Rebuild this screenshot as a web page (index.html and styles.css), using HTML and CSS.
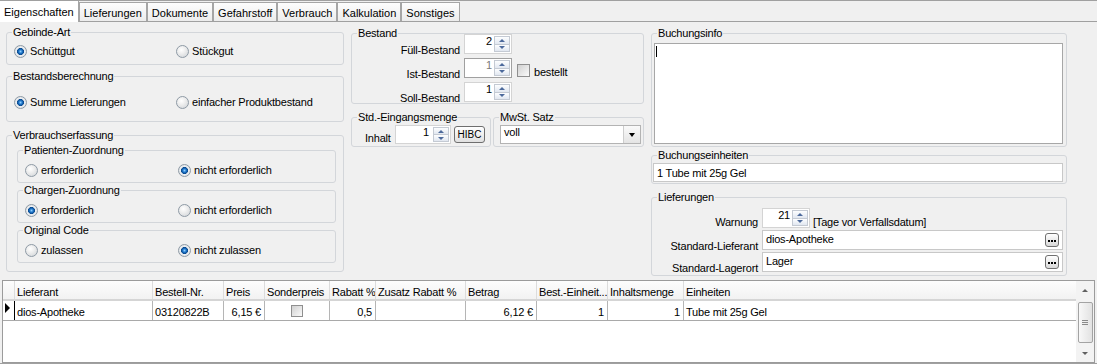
FILE: index.html
```html
<!DOCTYPE html>
<html lang="de">

<head>
    <meta charset="utf-8">
    <title>Artikel - Eigenschaften</title>
    <link rel="stylesheet" href="styles.css">
</head>

<body>

    <div class="window">
        <div class="tabbar">
            <div class="tab active">Eigenschaften</div>
            <div class="tab">Lieferungen</div>
            <div class="tab">Dokumente</div>
            <div class="tab">Gefahrstoff</div>
            <div class="tab">Verbrauch</div>
            <div class="tab">Kalkulation</div>
            <div class="tab">Sonstiges</div>
        </div>

        <div class="page">
            <!-- left column -->
            <div class="col col-left">
                <fieldset class="gb-gebinde">
                    <legend>Gebinde-Art</legend>
                    <div class="radios top-radios">
                        <span class="radio on"><i></i>Schüttgut</span>
                        <span class="radio"><i></i>Stückgut</span>
                    </div>
                </fieldset>

                <fieldset class="gb-berechnung">
                    <legend>Bestandsberechnung</legend>
                    <div class="radios top-radios">
                        <span class="radio on"><i></i>Summe Lieferungen</span>
                        <span class="radio"><i></i>einfacher Produktbestand</span>
                    </div>
                </fieldset>

                <fieldset class="gb-verbrauch">
                    <legend>Verbrauchserfassung</legend>
                    <div class="subs">
                        <fieldset class="sub">
                            <legend>Patienten-Zuordnung</legend>
                            <div class="radios">
                                <span class="radio"><i></i>erforderlich</span>
                                <span class="radio on"><i></i>nicht erforderlich</span>
                            </div>
                        </fieldset>
                        <fieldset class="sub">
                            <legend>Chargen-Zuordnung</legend>
                            <div class="radios">
                                <span class="radio on"><i></i>erforderlich</span>
                                <span class="radio"><i></i>nicht erforderlich</span>
                            </div>
                        </fieldset>
                        <fieldset class="sub">
                            <legend>Original Code</legend>
                            <div class="radios">
                                <span class="radio"><i></i>zulassen</span>
                                <span class="radio on"><i></i>nicht zulassen</span>
                            </div>
                        </fieldset>
                    </div>
                </fieldset>
            </div>

            <!-- middle column -->
            <div class="col col-mid">
                <fieldset class="gb-bestand">
                    <legend>Bestand</legend>
                    <div class="bestand-rows">
                        <div class="frow">
                            <span class="lbl">Füll-Bestand</span>
                            <div class="spin"><span class="val">2</span><span class="btns"><i class="up"></i><i class="dn"></i></span></div>
                        </div>
                        <div class="frow">
                            <span class="lbl">Ist-Bestand</span>
                            <div class="spin dis"><span class="val">1</span><span class="btns"><i class="up"></i><i class="dn"></i></span></div>
                            <span class="check"></span>
                            <span class="check-text">bestellt</span>
                        </div>
                        <div class="frow">
                            <span class="lbl">Soll-Bestand</span>
                            <div class="spin"><span class="val">1</span><span class="btns"><i class="up"></i><i class="dn"></i></span></div>
                        </div>
                    </div>
                </fieldset>

                <div class="mid-bottom">
                    <fieldset class="gb-std">
                        <legend>Std.-Eingangsmenge</legend>
                        <div class="std-row">
                            <span class="lbl-inhalt">Inhalt</span>
                            <div class="spin wide"><span class="val">1</span><span class="btns"><i class="up"></i><i class="dn"></i></span></div>
                            <span class="hibc">HIBC</span>
                        </div>
                    </fieldset>
                    <fieldset class="gb-mwst">
                        <legend>MwSt. Satz</legend>
                        <div class="combo"><span class="txt">voll</span><span class="drop"></span></div>
                    </fieldset>
                </div>
            </div>

            <!-- right column -->
            <div class="col col-right">
                <fieldset class="gb-info">
                    <legend>Buchungsinfo</legend>
                    <div class="memo"><span class="caret"></span></div>
                </fieldset>

                <fieldset class="gb-einh">
                    <legend>Buchungseinheiten</legend>
                    <div class="edit">1 Tube mit 25g Gel</div>
                </fieldset>

                <fieldset class="gb-lief">
                    <legend>Lieferungen</legend>
                    <div class="lief-rows">
                        <div class="frow warn">
                            <span class="lbl">Warnung</span>
                            <div class="spin"><span class="val">21</span><span class="btns"><i class="up"></i><i class="dn"></i></span></div>
                            <span class="hint">[Tage vor Verfallsdatum]</span>
                        </div>
                        <div class="frow">
                            <span class="lbl">Standard-Lieferant</span>
                            <div class="edit"><span class="txt">dios-Apotheke</span><span class="ell"><b></b></span></div>
                        </div>
                        <div class="frow">
                            <span class="lbl">Standard-Lagerort</span>
                            <div class="edit"><span class="txt">Lager</span><span class="ell"><b></b></span></div>
                        </div>
                    </div>
                </fieldset>
            </div>
        </div>

        <div class="grid">
            <div class="table">
                <div class="row head">
                    <div class="c"></div>
                    <div class="c">Lieferant</div>
                    <div class="c">Bestell-Nr.</div>
                    <div class="c">Preis</div>
                    <div class="c">Sonderpreis</div>
                    <div class="c">Rabatt %</div>
                    <div class="c">Zusatz Rabatt %</div>
                    <div class="c">Betrag</div>
                    <div class="c">Best.-Einheit...</div>
                    <div class="c">Inhaltsmenge</div>
                    <div class="c last">Einheiten</div>
                </div>
                <div class="row data">
                    <div class="c ind"><i></i></div>
                    <div class="c">dios-Apotheke</div>
                    <div class="c">03120822B</div>
                    <div class="c r">6,15 €</div>
                    <div class="c ctr"><span class="check small"></span></div>
                    <div class="c r">0,5</div>
                    <div class="c"></div>
                    <div class="c r">6,12 €</div>
                    <div class="c r">1</div>
                    <div class="c r">1</div>
                    <div class="c last">Tube mit 25g Gel</div>
                </div>
            </div>
            <div class="vscroll">
                <span class="sb-btn sb-up"></span>
                <span class="sb-thumb"><b></b></span>
                <span class="sb-btn sb-dn"></span>
            </div>
        </div>
    </div>

</body>

</html>
```

FILE: styles.css
```css
* {
    box-sizing: border-box;
}

body {
    margin: 0;
    background-color: #f0f0f0;
    font-family: "Liberation Sans", Arial, sans-serif;
    font-size: 11px;
    line-height: 13px;
    letter-spacing: -0.2px;
    color: #000;
}

.window {
    width: 1097px;
    height: 364px;
    overflow: hidden;
    border-bottom: 1px solid #a0a0a0;
}

/* tabs */
.tabbar {
    display: flex;
    align-items: flex-end;
    height: 22px;
    border-top: 1px solid #a0a0a0;
    border-bottom: 1px solid #a0a0a0;
}

.tab {
    height: 19px;
    padding: 4px 4px 0;
    border: 1px solid #a5a5a5;
    border-bottom: 0;
    background: linear-gradient(#fdfdfd, #ececec);
    white-space: nowrap;
    letter-spacing: 0;
}

.tab.active {
    height: 21px;
    margin-bottom: -1px;
    padding-top: 5px;
    border: 0;
    border-right: 1px solid #a5a5a5;
    background: #fff;
}

/* page layout */
.page {
    display: flex;
    gap: 7px;
    height: 258px;
    padding: 4px 0 0 6px;
}

.col {
    display: flex;
    flex-direction: column;
}

.col-left {
    width: 338px;
}

.col-mid {
    width: 293px;
    margin-top: 1px;
}

.col-right {
    width: 416px;
    margin-top: 1px;
}

fieldset {
    margin: 0;
    padding: 0;
    min-width: 0;
    border: 1px solid #d3d6da;
    border-radius: 3px;
}

legend {
    margin-left: 5px;
    padding: 0 1px;
    line-height: 13px;
}

/* radios */
.radios {
    display: grid;
    padding-left: 7px;
}

.top-radios {
    grid-template-columns: 162px 1fr;
}

.radio {
    display: flex;
    align-items: center;
    gap: 3px;
    height: 13px;
    white-space: nowrap;
}

.radio i {
    flex: none;
    width: 13px;
    height: 13px;
    border: 1px solid #8e9aa5;
    border-radius: 50%;
    background: radial-gradient(circle at 40% 35%, #fff 0, #f0f0f0 35%, #cdd1d5 100%);
}

.radio.on i {
    background: radial-gradient(circle, #8fd0ff 0, #1d74c8 1.8px, #0b4a8f 3.2px, #eef0f2 3.8px, #d3d7db 100%);
}

.gb-gebinde {
    height: 39px;
}

.gb-gebinde .radios {
    padding-top: 6px;
}

.gb-berechnung {
    height: 52px;
    margin-top: 5px;
}

.gb-berechnung .radios {
    padding-top: 13px;
}

.gb-verbrauch {
    height: 143px;
    margin-top: 7px;
}

.subs {
    display: flex;
    flex-direction: column;
    gap: 1px;
    padding: 2px 7px 0 10px;
}

.sub {
    height: 39px;
}

.sub .radios {
    grid-template-columns: 153px 1fr;
    padding-top: 7px;
}

/* form rows */
.frow {
    display: flex;
    height: 20px;
}

.lbl {
    width: 108px;
    margin-right: 4px;
    padding-top: 10px;
    text-align: right;
    white-space: nowrap;
}

.gb-bestand {
    height: 77px;
}

.bestand-rows {
    display: flex;
    flex-direction: column;
    gap: 4px;
    margin-top: -6px;
}

/* spin edit */
.spin {
    display: flex;
    width: 48px;
    height: 20px;
    border: 1px solid #d4d4d4;
    background: #fff;
}

.spin .val {
    flex: 1;
    padding-right: 2px;
    text-align: right;
}

.spin.dis {
    border-color: #a0a0a0;
    color: #7a7a7a;
}

.btns {
    display: flex;
    flex-direction: column;
    width: 16px;
    margin: 1px 1px 1px 0;
}

.btns i {
    flex: 1;
    display: flex;
    align-items: center;
    justify-content: center;
    border: 1px solid #c4cad3;
    background: linear-gradient(#fdfeff, #e1e7f0);
}

.btns i + i {
    border-top: 0;
}

.btns i::before {
    content: "";
    border-left: 3px solid transparent;
    border-right: 3px solid transparent;
}

.btns .up::before {
    border-bottom: 3px solid #4d6a9c;
}

.btns .dn::before {
    border-top: 3px solid #4d6a9c;
}

.check {
    flex: none;
    width: 13px;
    height: 13px;
    margin: 6px 4px 0 5px;
    border: 1px solid #8f8f8f;
    background: linear-gradient(135deg, #d0d0d0, #fafafa);
}

.check-text {
    padding-top: 8px;
}

.mid-bottom {
    display: flex;
    gap: 2px;
    margin-top: 7px;
}

.gb-std {
    width: 140px;
    height: 36px;
}

.std-row {
    display: flex;
    padding: 1px 0 0 13px;
}

.lbl-inhalt {
    width: 30px;
    padding-top: 7px;
}

.spin.wide {
    width: 56px;
    height: 19px;
}

.spin.wide .val {
    padding-right: 4px;
}

.hibc {
    width: 31px;
    height: 17px;
    margin: 1px 0 0 3px;
    border: 1px solid #6e6e6e;
    border-radius: 3px;
    background: linear-gradient(#fff, #e0e0e0);
    font-size: 10px;
    line-height: 15px;
    letter-spacing: 0;
    text-align: center;
}

.gb-mwst {
    width: 151px;
    height: 36px;
}

.combo {
    display: flex;
    width: 141px;
    height: 19px;
    margin: 1px 0 0 6px;
    border: 1px solid #b3b3b3;
    background: #fff;
}

.combo .txt {
    flex: 1;
    padding-left: 3px;
}

.drop {
    display: flex;
    align-items: center;
    justify-content: center;
    width: 17px;
    border-left: 1px solid #cdcdcd;
    background: linear-gradient(#fafafa, #e4e4e4);
}

.drop::before {
    content: "";
    border-left: 3.5px solid transparent;
    border-right: 3.5px solid transparent;
    border-top: 4px solid #000;
}

/* right column */
.gb-info {
    height: 120px;
}

.memo {
    height: 101px;
    margin: 3px 3px 0 2px;
    border: 1px solid #a7a7a7;
    background: #fff;
}

.caret {
    display: block;
    width: 1px;
    height: 11px;
    margin: 2px 0 0 1px;
    background: #000;
}

.edit {
    height: 19px;
    padding: 3px 3px 0;
    border: 1px solid #c8c8c8;
    background: #fff;
    white-space: nowrap;
}

.gb-einh {
    height: 35px;
    margin-top: 2px;
}

.gb-einh .edit {
    margin: 1px 3px 0 1px;
}

.gb-lief {
    height: 85px;
    margin-top: 7px;
}

.lief-rows {
    display: flex;
    flex-direction: column;
    gap: 2px;
    padding-top: 4px;
}

.lief-rows .lbl {
    width: 106px;
}

.warn .lbl,
.hint {
    padding-top: 8px;
}

.hint {
    margin-left: 3px;
}

.lief-rows .edit {
    display: flex;
    width: 301px;
    height: 20px;
    padding-top: 2px;
}

.ell {
    display: flex;
    align-items: center;
    justify-content: center;
    width: 14px;
    height: 14px;
    margin-left: auto;
    padding-top: 2px;
    border: 1px solid #707070;
    border-radius: 3px;
    background: linear-gradient(#fff, #d8d8d8);
}

.ell b {
    width: 2px;
    height: 2px;
    background: #000;
    box-shadow: -3px 0 #000, 3px 0 #000;
}

/* grid */
.grid {
    display: flex;
    height: 83px;
    margin: 0 2px 0 2px;
    border: 1px solid #9b9b9b;
    background: #fff;
}

.table {
    flex: 1;
}

.row {
    display: grid;
    grid-template-columns: 12px 138px 71px 41px 65px 46px 90px 71px 71px 76px 1fr;
}

.c {
    padding: 5px 2px 0 2px;
    white-space: nowrap;
    overflow: hidden;
}

.head {
    height: 20px;
    border-bottom: 2px solid #d5d5d5;
    background: linear-gradient(#fdfdfd, #f2f2f2);
}

.head .c {
    border-right: 1px solid #dcdcdc;
}

.data {
    height: 20px;
    border-bottom: 1px solid #a9a9a9;
}

.data .c {
    border-right: 1px solid #b5b5b5;
}

.c.last {
    border-right: 0;
}

.c.r {
    padding-right: 3px;
    text-align: right;
}

.data .ind {
    padding: 2px 0 0 2px;
    border-right-color: #000;
}

.ind i {
    display: block;
    width: 0;
    height: 0;
    border-left: 5px solid #000;
    border-top: 5px solid transparent;
    border-bottom: 5px solid transparent;
}

.c.ctr {
    display: flex;
    justify-content: center;
    padding-top: 4px;
}

.check.small {
    width: 12px;
    height: 12px;
    margin: 0;
}

.vscroll {
    flex: none;
    display: flex;
    flex-direction: column;
    align-items: center;
    width: 18px;
    background: #f3f3f3;
}

.sb-btn {
    display: flex;
    align-items: center;
    justify-content: center;
    width: 100%;
    height: 18px;
}

.sb-btn::before {
    content: "";
    border-left: 3px solid transparent;
    border-right: 3px solid transparent;
}

.sb-up::before {
    border-bottom: 3px solid #606060;
}

.sb-dn {
    margin-top: auto;
}

.sb-dn::before {
    border-top: 3px solid #606060;
}

.sb-thumb {
    display: flex;
    align-items: center;
    justify-content: center;
    width: 15px;
    height: 41px;
    margin-top: 3px;
    border: 1px solid #a3a3a3;
    border-radius: 2px;
    background: linear-gradient(90deg, #f8f8f8, #e2e2e2);
}

.sb-thumb b {
    width: 6px;
    height: 1px;
    background: #8a8a8a;
    box-shadow: 0 -2px #8a8a8a, 0 2px #8a8a8a;
}
```
